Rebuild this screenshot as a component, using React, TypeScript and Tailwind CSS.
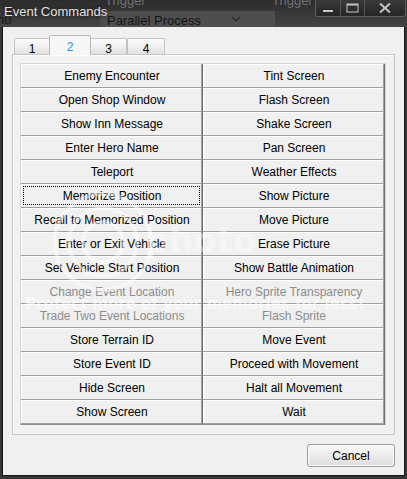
import React from "react";

const rows: [string, string, boolean?][] = [
  ["Enemy Encounter", "Tint Screen"],
  ["Open Shop Window", "Flash Screen"],
  ["Show Inn Message", "Shake Screen"],
  ["Enter Hero Name", "Pan Screen"],
  ["Teleport", "Weather Effects"],
  ["Memorize Position", "Show Picture"],
  ["Recall to Memorized Position", "Move Picture"],
  ["Enter or Exit Vehicle", "Erase Picture"],
  ["Set Vehicle Start Position", "Show Battle Animation"],
  ["Change Event Location", "Hero Sprite Transparency", true],
  ["Trade Two Event Locations", "Flash Sprite", true],
  ["Store Terrain ID", "Move Event"],
  ["Store Event ID", "Proceed with Movement"],
  ["Hide Screen", "Halt all Movement"],
  ["Show Screen", "Wait"],
];

function Cmd({ label, disabled, focused }: { label: string; disabled?: boolean; focused?: boolean }) {
  return (
    <div
      className={
        "relative h-[24px] flex items-center justify-center bg-[#f0f0f0] text-[12px] leading-none shadow-[inset_-1px_0_0_#707070,inset_-2px_-1px_0_#a0a0a0,inset_1px_1px_0_#ffffff] " +
        (disabled ? "text-[#8c8c8c]" : "text-black")
      }
    >
      <span>{label}</span>
      {focused && (
        <span className="absolute top-[2px] left-[2px] right-[3px] bottom-[3px] border border-dotted border-black" />
      )}
    </div>
  );
}

function Tab({ label, selected, w }: { label: string; selected?: boolean; w: string }) {
  if (selected) {
    return (
      <div
        className={
          w +
          " relative z-10 h-[20px] -mb-px -mx-px border border-b-0 border-[#b9b9b9] rounded-t-[2px] bg-[#f6f6f6] flex items-start justify-center pt-[2px] text-[12px] text-[#2d8fef]"
        }
      >
        {label}
      </div>
    );
  }
  return (
    <div
      className={
        w +
        " h-[16px] border border-b-0 border-[#c2c2c2] rounded-t-[2px] bg-gradient-to-b from-[#fcfcfc] via-[#f0f0f0] to-[#e0e0e0] flex items-start justify-center pt-[1px] text-[12px] text-black"
      }
    >
      {label}
    </div>
  );
}

export default function App() {
  return (
    <div
      className="w-[407px] h-[479px] bg-[#353535] overflow-hidden pl-[2px] flex flex-col"
      style={{ fontFamily: '"Liberation Sans", Arial, sans-serif' }}
    >
      {/* Title bar */}
      <div className="relative -ml-[2px] w-[407px] h-[27px] shrink-0 bg-gradient-to-b from-[#2c2c2c] via-[#383838] to-[#454545] overflow-hidden">
        <div className="absolute left-[100px] top-[11px] w-[175px] h-[16px] bg-[#4e4e4e]" />
        <span className="absolute left-[105px] top-[-9px] text-[13px] text-[#727272]">Trigger</span>
        <span className="absolute left-[272px] top-[-9px] text-[13px] text-[#727272]">Trigger Switch</span>
        <span className="absolute left-[107px] top-[11px] text-[13px] text-[#151515]">Parallel Process</span>
        <svg className="absolute left-[231px] top-[16px]" width="10" height="6" viewBox="0 0 10 6">
          <path d="M1 1 L5 5 L9 1" stroke="#2a2a2a" strokeWidth="1.2" fill="none" />
        </svg>
        <span className="absolute left-[-3px] top-[10px] text-[13px] text-[#1a1a1a]">nu</span>
        <span className="absolute left-[4px] top-[2px] text-[13px] text-[#e2e2e2] [text-shadow:0_0_4px_rgba(0,0,0,0.8)]">
          Event Commands
        </span>
        {/* caption buttons */}
        <div className="absolute right-[1px] top-0 h-[17px] flex border border-t-0 border-[#606060] rounded-b-[3px] overflow-hidden bg-gradient-to-b from-[#3a3a3a] to-[#262626]">
          <div className="w-[25px] h-full flex items-center justify-center border-r border-[#555555]">
            <svg width="12" height="12" viewBox="0 0 12 12">
              <rect x="1" y="8" width="10" height="2" fill="#c4c4c4" />
            </svg>
          </div>
          <div className="w-[24px] h-full flex items-center justify-center border-r border-[#555555]">
            <svg width="13" height="10" viewBox="0 0 13 10">
              <rect x="1" y="1" width="11" height="8" fill="none" stroke="#c4c4c4" strokeWidth="1" />
              <rect x="1" y="1" width="11" height="1.5" fill="#c4c4c4" />
            </svg>
          </div>
          <div className="w-[40px] h-full flex items-center justify-center">
            <svg width="12" height="10" viewBox="0 0 12 10">
              <path d="M1 0.5 L11 9.5 M11 0.5 L1 9.5" stroke="#c4c4c4" strokeWidth="2" fill="none" />
            </svg>
          </div>
        </div>
      </div>

      {/* Client */}
      <div className="relative w-[403px] h-[449px] shrink-0 bg-[#f0f0f0] border-x border-b border-[#151515] pt-[8px] pl-[9px]">
        <div className="w-[383px]">
          <div className="flex items-end h-[19px] pl-[2px]">
            <Tab label="1" w="w-[36px]" />
            <Tab label="2" w="w-[42px]" selected />
            <Tab label="3" w="w-[37px]" />
            <Tab label="4" w="w-[38px]" />
          </div>
          <div className="h-[381px] border border-[#c6c6c6] bg-[#f1f2f1] pt-[8px] pl-[7px] shadow-[inset_1px_1px_0_#ffffff]">
            <div className="w-[366px] border border-[#d6d6d6] border-b-[#909090] grid grid-cols-2">
              {rows.map(([a, b, dis], i) => (
                <React.Fragment key={i}>
                  <Cmd label={a} disabled={dis} focused={i === 5} />
                  <Cmd label={b} disabled={dis} />
                </React.Fragment>
              ))}
            </div>
          </div>
          <div className="flex justify-end mt-[9px]">
            <div className="w-[88px] h-[23px] rounded-[3px] border border-[#9c9c9c] bg-gradient-to-b from-[#f8f8f8] via-[#ececec] to-[#dcdcdc] flex items-center justify-center text-[12px] text-black shadow-[inset_0_0_0_1px_#fbfbfb]">
              Cancel
            </div>
          </div>
        </div>

        {/* photo watermark */}
        <div className="pointer-events-none absolute inset-0">
          <svg className="absolute left-[45px] top-[160px]" width="110" height="110" viewBox="0 0 110 110">
            <circle cx="55" cy="55" r="48" fill="none" stroke="rgba(255,255,255,0.45)" strokeWidth="4" />
            <circle cx="55" cy="55" r="34" fill="none" stroke="rgba(255,255,255,0.45)" strokeWidth="4" />
            <circle cx="55" cy="55" r="20" fill="none" stroke="rgba(255,255,255,0.45)" strokeWidth="4" />
          </svg>
          <span
            className="absolute left-[142px] top-[196px] text-[34px] font-bold text-white/40 leading-none"
            style={{ fontFamily: '"DejaVu Sans", sans-serif' }}
          >
            photo
          </span>
          <span
            className="absolute left-[22px] top-[270px] text-[15px] font-bold text-white/60 whitespace-nowrap leading-none"
            style={{ fontFamily: '"DejaVu Sans", sans-serif' }}
          >
            Protect more of your memories for less!
          </span>
        </div>
      </div>
    </div>
  );
}
